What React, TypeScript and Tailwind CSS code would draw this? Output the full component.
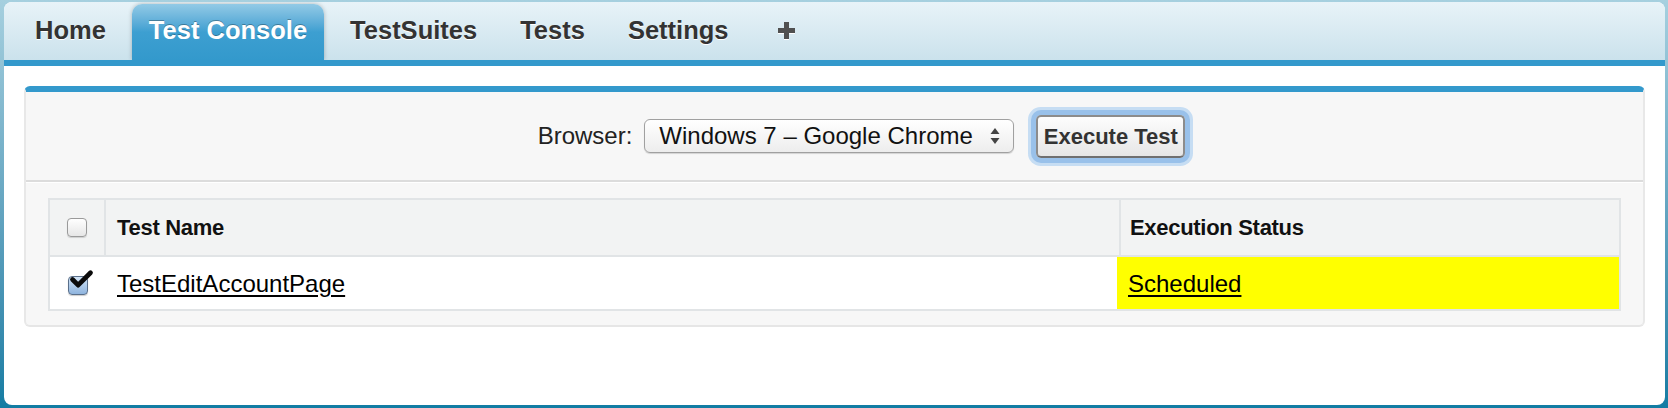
import { Check } from 'lucide-react';

const TABS = ['Home', 'Test Console', 'TestSuites', 'Tests', 'Settings'];
const ACTIVE = 'Test Console';

function UpDownArrows() {
  return (
    <svg width="10" height="18" viewBox="0 0 10 18" className="shrink-0">
      <path d="M5 1 L9.5 7 L0.5 7 Z" fill="#444" />
      <path d="M5 17 L9.5 11 L0.5 11 Z" fill="#444" />
    </svg>
  );
}

function PlusIcon() {
  return (
    <svg width="19" height="19" viewBox="0 0 19 19">
      <path d="M7 1h5v6h6v5h-6v6H7v-6H1V7h6z" fill="#fff" transform="translate(0 1)" />
      <path d="M7 1h5v6h6v5h-6v6H7v-6H1V7h6z" fill="#505050" />
    </svg>
  );
}

function MacCheckbox({ checked }: { checked?: boolean }) {
  return (
    <div className="relative w-[20px] h-[19px]">
      <div
        className={
          checked
            ? 'w-full h-full rounded-[4px] border border-[#5a6f8a] bg-linear-to-b from-[#d2e4f6] to-[#8fb4de] shadow-[0_1px_1px_rgba(0,0,0,0.2)]'
            : 'w-full h-full rounded-[4px] border border-[#9a9a9a] bg-linear-to-b from-[#ffffff] to-[#e6e6e6] shadow-[0_1px_1px_rgba(0,0,0,0.15)]'
        }
      />
      {checked && (
        <Check
          className="absolute left-[0px] top-[-11px] w-[27px] h-[29px] text-[#0b0b0b]"
          strokeWidth={4.2}
        />
      )}
    </div>
  );
}

export default function App() {
  return (
    <div className="w-[1668px] h-[408px] bg-linear-to-b from-[#a6d0df] to-[#117ca3] pt-[2px] pl-[4px] pr-[3px] pb-[3px] font-['Liberation_Sans',Arial,sans-serif]">
      <div className="h-full bg-white rounded-[8px] overflow-hidden flex flex-col">
        {/* Tab bar */}
        <div className="h-[58px] shrink-0 pl-[14px] flex items-end gap-[9px] bg-linear-to-b from-[#e8f3f8] to-[#cbe2ec]">
          {TABS.map(tab => {
            const active = tab === ACTIVE;
            return (
              <div
                key={tab}
                className={
                  active
                    ? 'h-[56px] px-[17px] pb-[3px] flex items-center rounded-t-[10px] bg-linear-to-b from-[#92cae6] via-[#3d9fd1] to-[#3399cc] text-white text-[25.5px] font-bold shadow-[0_0_4px_rgba(0,0,0,0.25)] [text-shadow:0_-1px_0_rgba(0,0,0,0.3)]'
                    : 'h-[56px] px-[17px] pb-[3px] flex items-center text-[#333] text-[25.5px] font-bold [text-shadow:0_1px_0_#fff]'
                }
              >
                {tab}
              </div>
            );
          })}
          <div className="h-[56px] pl-[23px] pb-[4px] flex items-center">
            <PlusIcon />
          </div>
        </div>
        <div className="h-[6px] shrink-0 bg-[#3399cc]" />

        {/* Content */}
        <div className="flex-1 px-[20px] pt-[20px]">
          <div className="rounded-[6px] border-t-[6px] border-t-[#3399cc] border-x-2 border-x-[#e8e8e8] border-b-2 border-b-[#e6e6e6] bg-[#f7f7f7]">
            {/* Toolbar */}
            <div className="h-[90px] border-b-2 border-[#dcdcdc] flex items-center justify-center pl-[54px]">
              <span className="text-[24px] text-[#222]">Browser:</span>
              <div className="ml-[12px] w-[370px] h-[34px] rounded-[6px] border border-[#a0a0a0] bg-linear-to-b from-[#ffffff] to-[#ededed] shadow-[0_1px_1px_rgba(0,0,0,0.15)] flex items-center pl-[14px] pr-[13px]">
                <span className="flex-1 text-[24px] text-[#111] leading-none">Windows 7 – Google Chrome</span>
                <UpDownArrows />
              </div>
              <button className="ml-[22px] w-[149px] h-[43px] rounded-[5px] border-2 border-[#8c8c8c] border-b-[#6f6f6f] bg-linear-to-b from-[#fdfdfd] to-[#e6e6e6] text-[22px] font-bold text-[#333] shadow-[0_0_0_5px_#99c1ea,0_0_0_8px_#c6ddf3]">
                Execute Test
              </button>
            </div>

            {/* Table */}
            <div className="px-[22px] pt-[16px] pb-[14px] shadow-[inset_0_1px_0_#fff]">
              <div className="border-2 border-[#e1e4e6]">
                <div className="h-[57px] flex bg-[#f2f3f3] border-b-2 border-[#e1e4e6]">
                  <div className="w-[56px] border-r-2 border-[#e1e4e6] flex items-center justify-center">
                    <MacCheckbox />
                  </div>
                  <div className="flex-1 pl-[11px] flex items-center text-[22px] font-bold text-[#111] tracking-[-0.3px]">
                    Test Name
                  </div>
                  <div className="w-[500px] border-l-2 border-[#e1e4e6] pl-[9px] flex items-center text-[22px] font-bold text-[#111] tracking-[-0.3px]">
                    Execution Status
                  </div>
                </div>
                <div className="h-[52px] flex bg-white">
                  <div className="w-[56px] flex items-center justify-center pt-[4px]">
                    <MacCheckbox checked />
                  </div>
                  <div className="flex-1 pl-[11px] flex items-center pt-[2px]">
                    <a className="text-[24px] text-black underline underline-offset-[3px]">TestEditAccountPage</a>
                  </div>
                  <div className="w-[502px] bg-[#ffff00] pl-[11px] flex items-center pt-[2px]">
                    <a className="text-[24px] text-black underline underline-offset-[3px]">Scheduled</a>
                  </div>
                </div>
              </div>
            </div>
          </div>
        </div>
      </div>
    </div>
  );
}
